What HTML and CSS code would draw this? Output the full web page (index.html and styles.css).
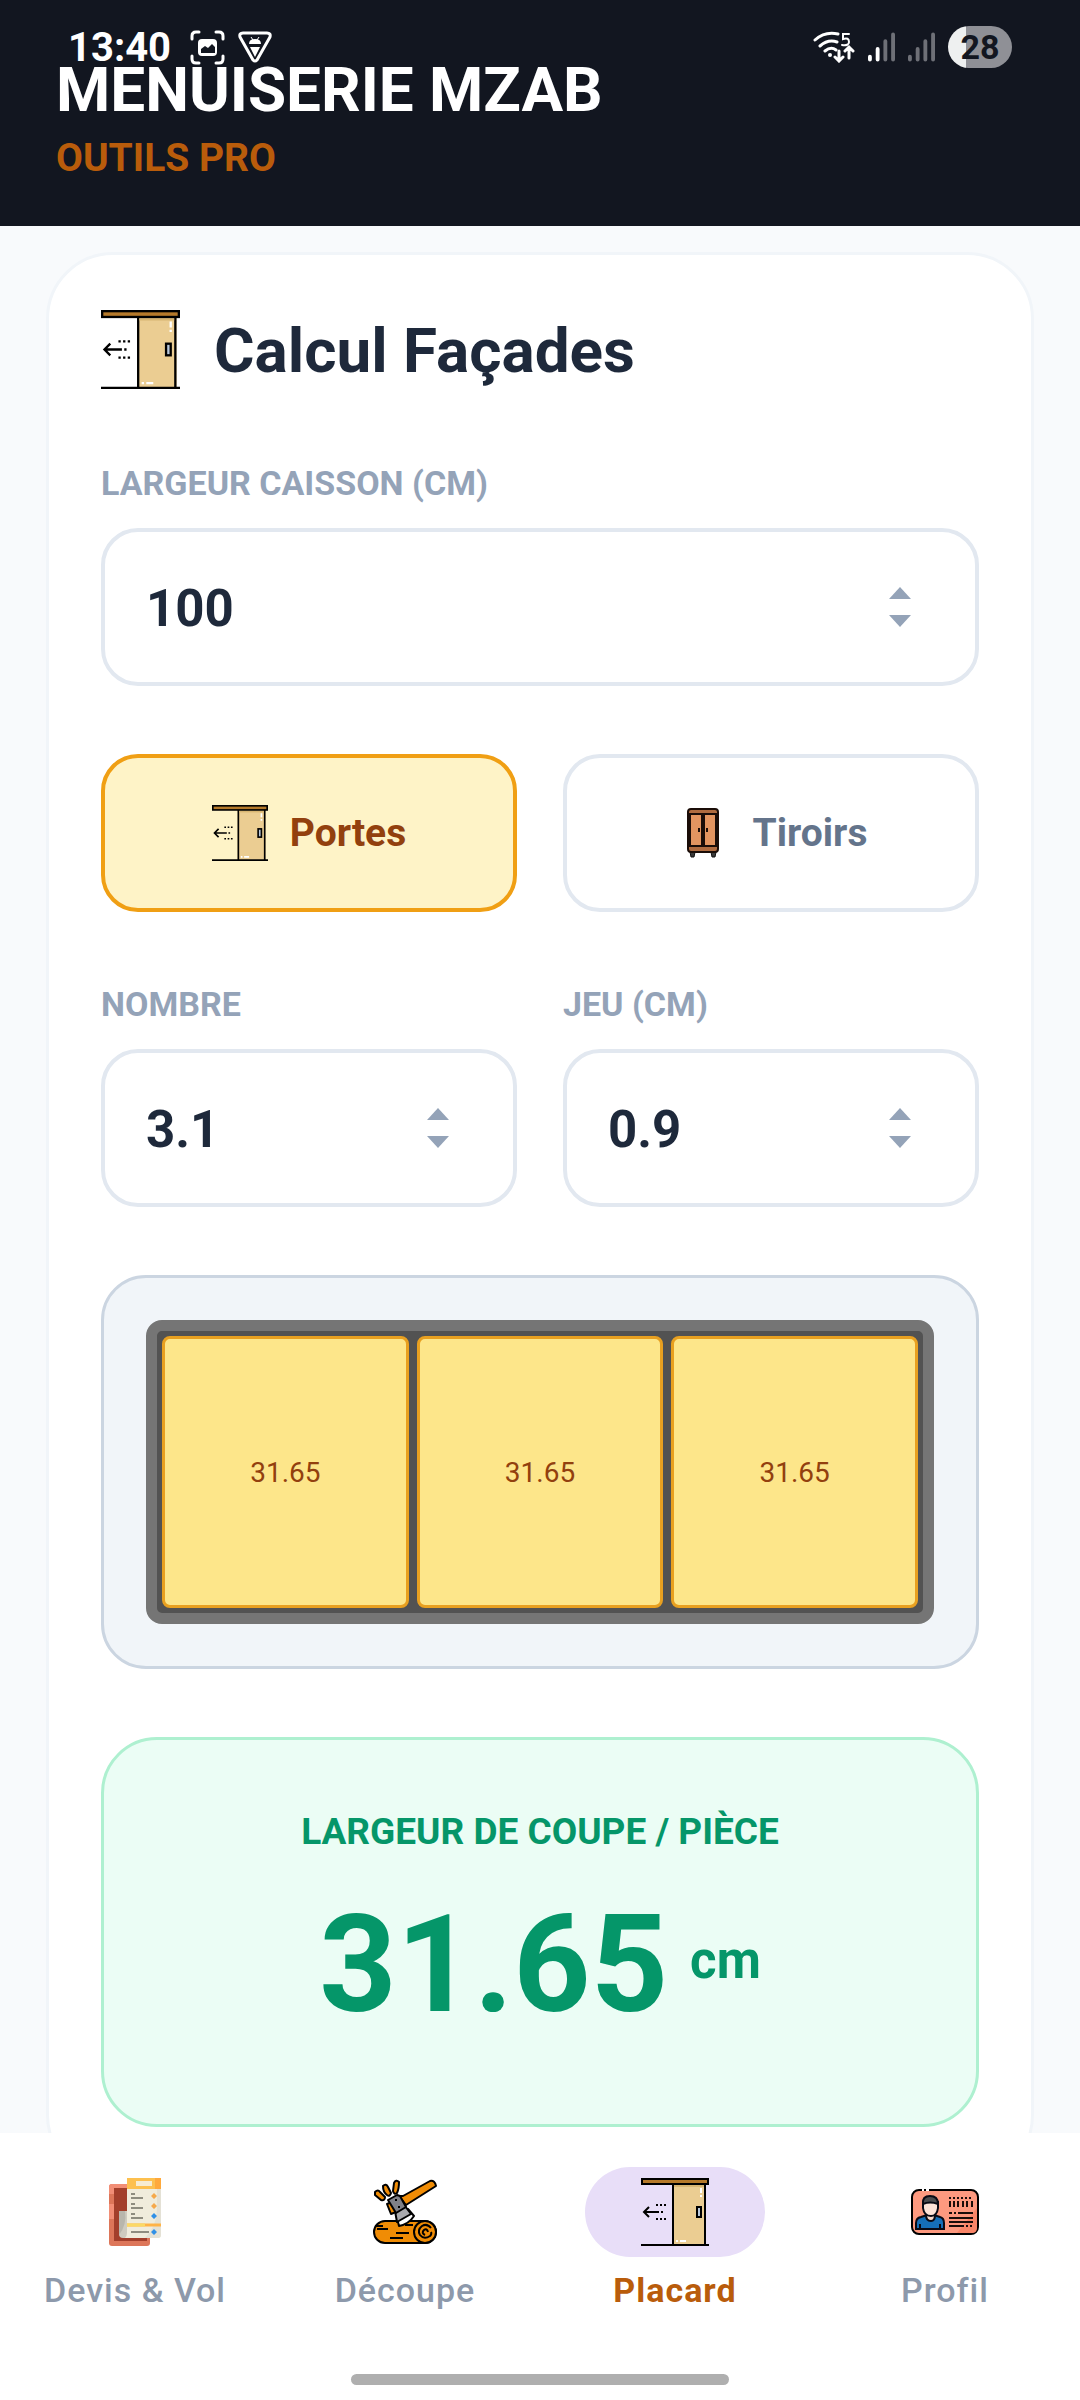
FILE: index.html
```html
<!DOCTYPE html>
<html lang="fr">
<head>
    <meta charset="UTF-8">
    <meta name="viewport" content="width=device-width, initial-scale=1.0">
    <title>Menuiserie Mzab - Outils Pro</title>
    <link rel="stylesheet" href="styles.css">
</head>
<body>
    <!-- Shared icons -->
    <svg class="sprite" aria-hidden="true">
        <symbol id="icon-door" viewBox="0 0 68 68">
            <rect x="31" y="6" width="34" height="61" fill="#ebcd92"/>
            <path d="M32 6v61M64 6v61" stroke="#000" stroke-width="2"/>
            <path d="M33 8h30" stroke="#d8b673" stroke-width="2"/>
            <rect x="1" y="1" width="66" height="5" fill="#b5792a" stroke="#000" stroke-width="2"/>
            <path d="M0 67h68" stroke="#000" stroke-width="2"/>
            <rect x="56" y="29" width="4" height="10" fill="#b9c8dc" stroke="#000" stroke-width="2"/>
            <path d="M60 10v5M60 17v2M35 63h2M39 63h6" stroke="#fff" stroke-width="2"/>
            <path d="M3 34h15M8 29l-5 5 5 5" fill="none" stroke="#000" stroke-width="2"/>
            <path d="M20 34h2M15 27h2M19 27h2M23 27h2M15 41h2M19 41h2M23 41h2" stroke="#000" stroke-width="2"/>
        </symbol>
        <symbol id="icon-wardrobe" viewBox="0 0 56 56">
            <path d="M15 47l1 5h3l1-5zM36 47l1 5h3l1-5z" fill="#3a3a3a" stroke="#111"/>
            <rect x="13" y="4" width="30" height="43" rx="3" fill="#b06c40" stroke="#1a0d08" stroke-width="2"/>
            <rect x="15" y="9" width="12" height="32" fill="#e39560" stroke="#1a0d08" stroke-width="2"/>
            <rect x="29" y="9" width="12" height="32" fill="#e39560" stroke="#1a0d08" stroke-width="2"/>
            <path d="M24 23v4M32 23v4" stroke="#1a0d08" stroke-width="2"/>
        </symbol>
        <symbol id="icon-quote" viewBox="0 0 68 68">
            <rect x="8" y="6" width="41" height="62" rx="3" fill="#dd7659"/>
            <path d="M8 16v-7a3 3 0 0 1 3-3h15v4H13v6zM8 26h5v15H8z" fill="#f28e76"/>
            <rect x="13" y="10" width="33" height="53" fill="#a33f2b"/>
            <path d="M18 33h9v27h-5q-4 0-4-4z" fill="#cfcbbf"/>
            <path d="M18 33h6q2 14-6 24z" fill="#b9b6ac"/>
            <path d="M26 0h34v57q0 3-3 3H24q2-2 2-5z" fill="#f0ecdc"/>
            <path d="M56 11h4v46q0 3-3 3H44q12-12 12-30z" fill="#e4e1d5"/>
            <rect x="26" width="34" height="11" fill="#fdc04f"/>
            <rect x="54" width="6" height="11" fill="#ffa93c"/>
            <rect x="35" y="3" width="16" height="5" fill="#f7ecd2"/>
            <path d="M26 47h34" stroke="#ffb347" stroke-width="3"/>
            <path d="M26 47h18" stroke="#fbd965" stroke-width="3"/>
            <path d="M30 16h4M30 20h12M30 26h4M30 30h12M30 36h4M30 40h12M30 54h18" stroke="#8f8d80" stroke-width="2"/>
            <path d="M53 15l3 3-3 3-3-3zM53 25l3 3-3 3-3-3z" fill="#f5a94d"/>
            <path d="M53 35l3 3-3 3-3-3zM53 51l3 3-3 3-3-3z" fill="#3090e6"/>
        </symbol>
        <symbol id="icon-axe" viewBox="0 0 68 68">
            <g fill="#f08c05" stroke="#000" stroke-width="2" stroke-linejoin="round">
                <rect x="3" y="43" width="62" height="22" rx="11"/>
                <circle cx="54" cy="54" r="11"/>
                <path d="M16 26l4 10 5-2-4-10z"/>
                <path d="M28 18l4 0L59 3q5-1 6 5L35 27z"/>
                <path d="M4 14q3-3 5 0l5 5q0 4-4 3l-6-5zM12 8q3-3 5 1l3 6q-1 4-4 2-4-3-4-9zM23 5q2-4 5-1 0 7-2 11-3 2-4-2z"/>
            </g>
            <path d="M25 36l12-5 6 7q-5 8-15 10z" fill="#fff" stroke="#000" stroke-width="2" stroke-linejoin="round"/>
            <path d="M24 33l10-5 6 8-14 8z" fill="#a9aaae" stroke="#000" stroke-width="2" stroke-linejoin="round"/>
            <path d="M17 22l9-5 3 1 6 11-10 6z" fill="#808187" stroke="#000" stroke-width="2" stroke-linejoin="round"/>
            <path d="M25 21v2M28 28v2" stroke="#000" stroke-width="2"/>
            <path d="M6 51h11M5 48h7M25 55h13M19 60h13M34 47h8" stroke="#000" stroke-width="2"/>
            <path d="M60 50q-4-5-9-2-5 4-2 9 4 5 10 1 2-2 1-4M57 54q-1-4-4-2-3 3 1 5" fill="none" stroke="#000" stroke-width="2"/>
        </symbol>
        <symbol id="icon-card" viewBox="0 0 68 68">
            <rect x="1" y="12" width="66" height="44" rx="7" fill="#fd997f" stroke="#000" stroke-width="2"/>
            <path d="M46 55L66 30v20q0 5-5 5z" fill="#f98568"/>
            <path d="M5 51v-6q0-5 5-6l6-2h7l6 2q4 1 4 6v6z" fill="#156fb8" stroke="#0a0a14" stroke-width="2"/>
            <path d="M9 46v5M29 46v5" stroke="#0a0a14" stroke-width="2"/>
            <path d="M15 37h9q0 6-4 6-5 0-5-6z" fill="#f9d8c8" stroke="#0a0a14" stroke-width="2"/>
            <path d="M12 24h15v6q-1 8-7 8-7 0-8-8z" fill="#fde3d8" stroke="#0a0a14" stroke-width="2"/>
            <path d="M12 26q-1-8 7-8t8 8q-8-3-15 0z" fill="#4c4c4e" stroke="#0a0a14" stroke-width="2"/>
            <path d="M38 20h24" stroke="#1a0d0a" stroke-width="2" stroke-dasharray="2 2"/>
            <path d="M39 23v6M43 23v6M47 23v6M52 23v6M56 23v6M61 23v6" stroke="#1a0d0a" stroke-width="2"/>
            <path d="M38 35h3M43 35h2M47 35h15M38 40h24M38 44h24M38 48h15M55 48h2M59 48h2" stroke="#1a0d0a" stroke-width="2"/>
            <path d="M11 12h2M15 12h3" stroke="#fff" stroke-width="2"/>
        </symbol>
        <symbol id="icon-up" viewBox="0 0 22 12"><path d="M11 0l11 12H0z"/></symbol>
        <symbol id="icon-down" viewBox="0 0 22 12"><path d="M0 0h22L11 12z"/></symbol>
    </svg>

    <div class="app">
        <!-- System status bar -->
        <div class="status-bar">
            <div class="status-group">
                <span class="clock">13:40</span>
                <svg width="35" height="35" viewBox="0 0 35 35" fill="none" stroke="#fff" stroke-width="3" stroke-linecap="round">
                    <path d="M2 9V6q0-4 4-4h3M26 2h3q4 0 4 4v3M33 26v3q0 4-4 4h-3M9 33H6q-4 0-4-4v-3"/>
                    <rect x="8" y="9" width="19" height="17" rx="4" fill="#fff" stroke="none"/>
                    <path d="M11 23v-4l4-3 3 2 4-4 3 3v6z" fill="#121620" stroke="none"/>
                </svg>
                <svg width="34" height="32" viewBox="0 0 34 32" fill="none" stroke="#fff" stroke-width="3" stroke-linejoin="round">
                    <path d="M5 2h24q4 0 3 4L19 29q-2 2-4 0L2 6q-1-4 3-4z"/>
                    <path d="M11 13q0-5 6-5t6 5zM12 16h10l-5 10z" fill="#fff" stroke="none"/>
                    <path d="M13 6l2 3M21 6l-2 3" stroke-width="1"/>
                </svg>
            </div>
            <div class="status-group">
                <svg width="42" height="32" viewBox="0 0 42 32" fill="none" stroke="#fff" stroke-width="3" stroke-linecap="round">
                    <path d="M2 9q10-9 23-6M7 15q8-7 17-4M12 20q6-5 11-1"/>
                    <circle cx="17" cy="24" r="2" fill="#fff" stroke="none"/>
                    <path d="M36 3h-6v5q6-2 6 3 0 4-7 3" stroke-width="2"/>
                    <path d="M26 20v9M22 26l4 4 4-4M36 27V18M32 20l4-4 4 4"/>
                </svg>
                <svg width="27" height="30" viewBox="0 0 28 30" fill="none" stroke="#fff" stroke-width="4" stroke-linecap="round">
                    <path d="M2 25v3M10 17v11"/>
                    <path d="M18 9v19M26 2v26" stroke="#6e7077"/>
                </svg>
                <svg width="27" height="30" viewBox="0 0 28 30" fill="none" stroke="#6e7077" stroke-width="4" stroke-linecap="round">
                    <path d="M2 25v3M10 17v11M18 9v19M26 2v26"/>
                </svg>
                <span class="battery">28</span>
            </div>
        </div>

        <header class="header">
            <h1>MENUISERIE MZAB</h1>
            <p>OUTILS PRO</p>
        </header>

        <main class="content">
            <section class="card">
                <div class="card-title">
                    <svg class="icon-lg" aria-hidden="true"><use href="#icon-door"/></svg>
                    <h2>Calcul Façades</h2>
                </div>

                <div class="field">
                    <label for="largeur">LARGEUR CAISSON (CM)</label>
                    <div class="input-box">
                        <input type="number" id="largeur" value="100" step="1">
                        <div class="stepper">
                            <button type="button" aria-label="Augmenter la largeur" onclick="stepField('largeur', 1)"><svg><use href="#icon-up"/></svg></button>
                            <button type="button" aria-label="Diminuer la largeur" onclick="stepField('largeur', -1)"><svg><use href="#icon-down"/></svg></button>
                        </div>
                    </div>
                </div>

                <!-- Portes / Tiroirs -->
                <div class="row">
                    <button type="button" class="toggle active">
                        <svg class="icon-md" aria-hidden="true"><use href="#icon-door"/></svg>
                        <span>Portes</span>
                    </button>
                    <button type="button" class="toggle">
                        <svg class="icon-md" aria-hidden="true"><use href="#icon-wardrobe"/></svg>
                        <span>Tiroirs</span>
                    </button>
                </div>

                <div class="row">
                    <div class="field">
                        <label for="nombre">NOMBRE</label>
                        <div class="input-box">
                            <input type="number" id="nombre" value="3.1" step="0.1">
                            <div class="stepper">
                                <button type="button" aria-label="Augmenter le nombre" onclick="stepField('nombre', 1)"><svg><use href="#icon-up"/></svg></button>
                                <button type="button" aria-label="Diminuer le nombre" onclick="stepField('nombre', -1)"><svg><use href="#icon-down"/></svg></button>
                            </div>
                        </div>
                    </div>
                    <div class="field">
                        <label for="jeu">JEU (CM)</label>
                        <div class="input-box">
                            <input type="number" id="jeu" value="0.9" step="0.1">
                            <div class="stepper">
                                <button type="button" aria-label="Augmenter le jeu" onclick="stepField('jeu', 1)"><svg><use href="#icon-up"/></svg></button>
                                <button type="button" aria-label="Diminuer le jeu" onclick="stepField('jeu', -1)"><svg><use href="#icon-down"/></svg></button>
                            </div>
                        </div>
                    </div>
                </div>

                <!-- Cabinet preview -->
                <div class="preview">
                    <div class="cabinet" id="cabinet">
                        <div class="panel">31.65</div>
                        <div class="panel">31.65</div>
                        <div class="panel">31.65</div>
                    </div>
                </div>

                <!-- Result -->
                <div class="result">
                    <h3>LARGEUR DE COUPE / PIÈCE</h3>
                    <div class="result-value">
                        <span class="number" id="resultat">31.65</span>
                        <span class="unit">cm</span>
                    </div>
                </div>
            </section>
        </main>

        <nav class="bottom-nav">
            <div class="nav-items">
                <a href="#devis">
                    <span class="nav-icon"><svg><use href="#icon-quote"/></svg></span>
                    <span>Devis &amp; Vol</span>
                </a>
                <a href="#decoupe">
                    <span class="nav-icon"><svg><use href="#icon-axe"/></svg></span>
                    <span>Découpe</span>
                </a>
                <a href="#placard" class="active">
                    <span class="nav-icon"><svg><use href="#icon-door"/></svg></span>
                    <span>Placard</span>
                </a>
                <a href="#profil">
                    <span class="nav-icon"><svg><use href="#icon-card"/></svg></span>
                    <span>Profil</span>
                </a>
            </div>
            <div class="home-handle"></div>
        </nav>
    </div>

    <script>
        const fields = ["largeur", "nombre", "jeu"];

        // Width of one piece, with a gap between each pair
        function update() {
            const [largeur, nombre, jeu] = fields.map(id => parseFloat(document.getElementById(id).value));
            if (!(largeur > 0) || !(nombre >= 1) || !(jeu >= 0)) return;

            const piece = ((largeur - jeu * (nombre - 1)) / nombre).toFixed(2);
            document.getElementById("resultat").innerText = piece;
            document.getElementById("cabinet").innerHTML =
                `<div class="panel">${piece}</div>`.repeat(Math.floor(nombre));
        }

        function stepField(id, direction) {
            const input = document.getElementById(id);
            if (direction > 0) input.stepUp();
            else input.stepDown();
            update();
        }

        fields.forEach(id => document.getElementById(id).addEventListener("input", update));
    </script>
</body>
</html>
```
FILE: styles.css
```css
* {
    box-sizing: border-box;
}

body, h1, h2, h3, p {
    margin: 0;
    padding: 0;
}

body, input, button {
    font-family: Roboto, 'Liberation Sans', sans-serif;
}

.sprite {
    display: none;
}

.app {
    position: relative;
    display: flex;
    flex-direction: column;
    height: 100vh;
    background: #f8fafc;
    color: #1e293b;
}

/* Status bar */
.status-bar {
    position: absolute;
    top: 0;
    left: 0;
    right: 0;
    display: flex;
    justify-content: space-between;
    align-items: center;
    height: 94px;
    padding: 0 68px;
    color: #fff;
}

.status-group {
    display: flex;
    align-items: center;
    gap: 13px;
}

.clock {
    margin-right: 6px;
    font-size: 40px;
    font-weight: 700;
}

.battery {
    width: 64px;
    border-radius: 21px;
    background: linear-gradient(90deg, #eef0f0 18px, #8f9096 18px);
    color: #121620;
    font-size: 34px;
    font-weight: 700;
    line-height: 42px;
    text-align: center;
}

/* Header */
.header {
    padding: 52px 56px 44px;
    background: #121620;
}

.header h1 {
    color: #fff;
    font-size: 62px;
    font-weight: 700;
    line-height: 76px;
}

.header p {
    margin-top: 6px;
    color: #b95c0b;
    font-size: 39px;
    font-weight: 700;
    line-height: 48px;
}

/* Main card */
.content {
    flex: 1;
    min-height: 0;
    padding: 26px 46px;
    overflow-y: auto;
    scrollbar-width: none;
}

.card {
    display: flex;
    flex-direction: column;
    gap: 68px;
    padding: 52px;
    border: 3px solid #f1f5f9;
    border-radius: 67px;
    background: #fff;
}

.card-title {
    display: flex;
    align-items: center;
    gap: 34px;
    height: 84px;
}

.card-title h2 {
    padding-top: 3px;
    font-size: 62px;
    font-weight: 700;
}

.icon-lg {
    width: 79px;
    height: 79px;
}

.icon-md {
    width: 56px;
    height: 56px;
}

.row {
    display: grid;
    grid-template-columns: repeat(2, minmax(0, 1fr));
    gap: 46px;
}

.field label {
    display: block;
    margin-bottom: 21px;
    color: #94a3b8;
    font-size: 34px;
    font-weight: 700;
    line-height: 48px;
}

.input-box {
    display: flex;
    align-items: center;
    height: 158px;
    padding: 0 64px 0 41px;
    border: 4px solid #e2e8f0;
    border-radius: 37px;
    background: #fff;
}

.input-box input {
    flex: 1;
    width: 0;
    min-width: 0;
    padding: 2px 0 0;
    border: none;
    outline: none;
    background: none;
    color: #1e293b;
    font-size: 51px;
    font-weight: 700;
    appearance: textfield;
}

.stepper {
    display: flex;
    flex-direction: column;
    gap: 16px;
}

.stepper button {
    padding: 0;
    border: none;
    background: none;
    cursor: pointer;
}

.stepper svg {
    display: block;
    width: 22px;
    height: 12px;
    fill: #94a3b8;
}

.toggle {
    display: flex;
    justify-content: center;
    align-items: center;
    gap: 22px;
    height: 158px;
    border: 4px solid #e2e8f0;
    border-radius: 37px;
    background: #fff;
    color: #64748b;
    font-size: 39px;
    font-weight: 700;
    cursor: pointer;
}

.toggle.active {
    border-color: #f09f14;
    background: #fef3c7;
    color: #92400e;
}

/* Cabinet preview */
.preview {
    padding: 42px;
    border: 3px solid #cbd5e1;
    border-radius: 45px;
    background: #f1f5f9;
}

.cabinet {
    display: flex;
    gap: 8px;
    height: 304px;
    padding: 5px;
    border: 11px solid #757575;
    border-radius: 16px;
    background: #525252;
}

.panel {
    flex: 1;
    display: flex;
    justify-content: center;
    align-items: center;
    border: 3px solid #e8a020;
    border-radius: 8px;
    background: #fde68a;
    color: #92400e;
    font-size: 28px;
}

/* Result */
.result {
    padding: 68px 52px;
    border: 3px solid #aef0d0;
    border-radius: 56px;
    background: #ebfdf5;
    color: #059669;
    text-align: center;
}

.result h3 {
    font-size: 37px;
    font-weight: 700;
    line-height: 48px;
}

.result-value {
    display: flex;
    justify-content: center;
    align-items: center;
    gap: 22px;
    height: 182px;
    margin-top: 18px;
}

.number {
    font-size: 135px;
    font-weight: 700;
}

.unit {
    padding-bottom: 10px;
    font-size: 51px;
    font-weight: 700;
}

/* Bottom navigation */
.bottom-nav {
    padding: 34px 0 15px;
    background: #fff;
}

.nav-items {
    display: grid;
    grid-template-columns: repeat(4, 1fr);
}

.nav-items a {
    display: flex;
    flex-direction: column;
    align-items: center;
    gap: 11px;
    color: #8d99ab;
    font-size: 34px;
    font-weight: 500;
    line-height: 45px;
    letter-spacing: 1px;
    text-decoration: none;
}

.nav-items .active {
    color: #b95c0b;
    font-weight: 700;
}

.nav-icon {
    padding: 11px 56px;
    border-radius: 45px;
}

.active .nav-icon {
    background: #e8def8;
}

.nav-icon svg {
    display: block;
    width: 68px;
    height: 68px;
}

.home-handle {
    width: 35%;
    height: 11px;
    margin: 61px auto 0;
    border-radius: 6px;
    background: #afafaf;
}
```
